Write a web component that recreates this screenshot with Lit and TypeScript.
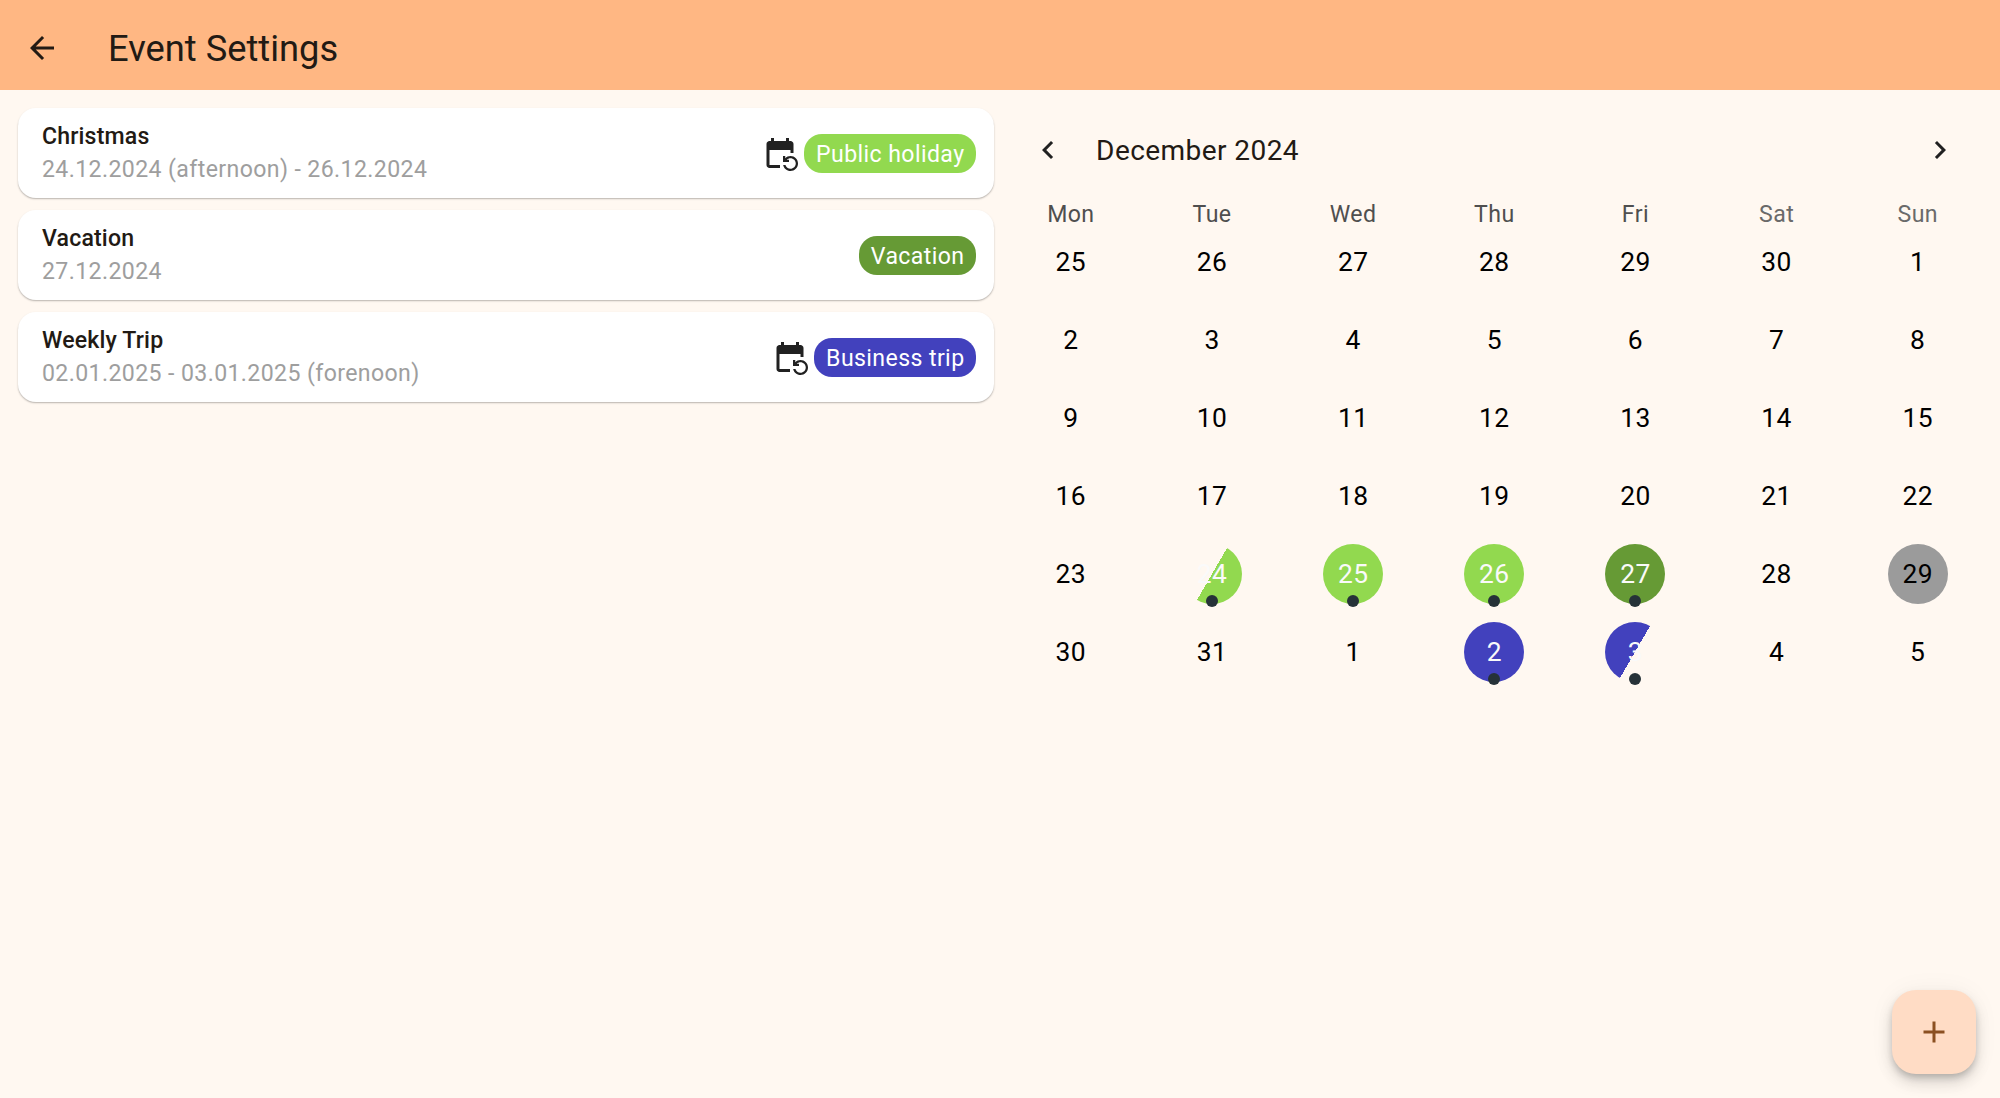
import { LitElement, html, css, svg, nothing } from "lit";
import { customElement, property } from "lit/decorators.js";
import { classMap } from "lit/directives/class-map.js";

const ICONS: Record<string, string> = {
  back: "M20 11H7.83l5.59-5.59L12 4l-8 8 8 8 1.41-1.41L7.83 13H20v-2z",
  left: "M15.41 7.41L14 6l-6 6 6 6 1.41-1.41L10.83 12z",
  right: "M10 6L8.59 7.41 13.17 12l-4.58 4.59L10 18l6-6z",
  plus: "M19 13h-6v6h-2v-6H5v-2h6V5h2v6h6v2z",
  repeat:
    "M21 12V6c0-1.1-.9-2-2-2h-1V2h-2v2H8V2H6v2H5c-1.1 0-2 .9-2 2v14c0 1.1.9 2 2 2h7v-2H5V10h14v2h2zM15.64 20c.43 1.45 1.77 2.5 3.36 2.5 1.93 0 3.5-1.57 3.5-3.5s-1.57-3.5-3.5-3.5c-.95 0-1.82.38-2.45 1H18V18h-4v-4h1.5v1.43c.9-.88 2.14-1.43 3.5-1.43 2.76 0 5 2.24 5 5s-2.24 5-5 5c-2.42 0-4.44-1.72-4.9-4h1.54z",
};

@customElement("md-icon")
class MdIcon extends LitElement {
  @property() name = "";
  static styles = css`
    :host { display: block; width: 36px; height: 36px; flex: none; }
    svg { display: block; width: 100%; height: 100%; fill: currentColor; }
  `;
  render() {
    return html`<svg viewBox="0 0 24 24">${svg`<path d=${ICONS[this.name]}></path>`}</svg>`;
  }
}

@customElement("event-card")
class EventCard extends LitElement {
  @property() heading = "";
  @property() dates = "";
  @property() label = "";
  @property() kind = "";
  @property({ type: Boolean }) repeats = false;
  static styles = css`
    :host {
      display: flex; align-items: center; box-sizing: border-box; height: 90px;
      padding: 0 18px 0 24px; border-radius: 18px; background: #fff;
      box-shadow: 0 1.5px 1.5px -0.5px rgba(0, 0, 0, 0.22), 0 1px 3px rgba(0, 0, 0, 0.07);
    }
    .text { flex: 1; }
    .title { font-size: 23.1px; line-height: 33px; font-weight: 500; letter-spacing: 0.165px; color: #221a14; }
    .dates { font-size: 23.1px; line-height: 33px; letter-spacing: 0.39px; color: #9e9e9e; }
    .icon { color: #212121; margin-right: 6px; }
    .badge {
      height: 39px; line-height: 41px; padding: 0 11.5px 0 12px; border-radius: 18px;
      font-size: 23.1px; letter-spacing: 0.4px; color: #fff;
    }
    .holiday { background: #92d94f; }
    .vacation { background: #669a35; }
    .business { background: #4241bd; }
  `;
  render() {
    return html`
      <div class="text">
        <div class="title">${this.heading}</div>
        <div class="dates">${this.dates}</div>
      </div>
      ${this.repeats ? html`<md-icon class="icon" name="repeat"></md-icon>` : nothing}
      <div class=${classMap({ badge: true, [this.kind]: true })}>${this.label}</div>
    `;
  }
}

type Mark = { fill: string; dot: boolean };
const MARKS: Record<number, Mark> = {
  29: { fill: "holiday-pm", dot: true },
  30: { fill: "holiday", dot: true },
  31: { fill: "holiday", dot: true },
  32: { fill: "vacation", dot: true },
  34: { fill: "today", dot: false },
  38: { fill: "business", dot: true },
  39: { fill: "business-am", dot: true },
};
const DAYS = Array.from({ length: 42 }, (_, i) => new Date(Date.UTC(2024, 10, 25 + i)).getUTCDate());

@customElement("month-calendar")
class MonthCalendar extends LitElement {
  static styles = css`
    :host { display: block; }
    .head { display: flex; align-items: center; height: 84px; padding: 0 30px; }
    .month {
      flex: 1; margin-left: 29.8px; padding-top: 1px; font-size: 28.05px; letter-spacing: 0.4125px; color: #221a14;
    }
    .chev { color: #212121; }
    .grid { display: grid; grid-template-columns: repeat(7, 1fr); grid-auto-rows: 78px; }
    .names { grid-auto-rows: 17px; padding-top: 14px; }
    .name { font-size: 23.1px; line-height: 17px; text-align: center; letter-spacing: 0.4125px; color: #4f4f4f; }
    .name.weekend { color: #6a6a6a; }
    .cell { display: flex; justify-content: center; align-items: center; position: relative; }
    .day {
      width: 60px; height: 60px; line-height: 60px; border-radius: 50%; text-align: center;
      font-size: 26.4px; letter-spacing: 0.4125px; color: #000;
    }
    .holiday, .holiday-pm, .vacation, .business, .business-am { color: #fafafa; }
    .holiday { background: #92d94f; }
    .holiday-pm { background: linear-gradient(120deg, transparent 50%, #92d94f 50%); }
    .vacation { background: #669a35; }
    .business { background: #4241bd; }
    .business-am { background: linear-gradient(120deg, #4241bd 50%, transparent 50%); }
    .today { background: #9b9b9b; }
    .dot {
      position: absolute; left: 50%; bottom: 6.5px; width: 12px; height: 12px;
      margin-left: -6px; border-radius: 50%; background: #263238;
    }
  `;
  render() {
    return html`
      <div class="head">
        <md-icon class="chev" name="left"></md-icon>
        <div class="month">December 2024</div>
        <md-icon class="chev" name="right"></md-icon>
      </div>
      <div class="grid names">
        ${["Mon", "Tue", "Wed", "Thu", "Fri", "Sat", "Sun"].map(
          (n, i) => html`<div class=${classMap({ name: true, weekend: i > 4 })}>${n}</div>`,
        )}
      </div>
      <div class="grid">
        ${DAYS.map((d, i) => {
          const m = MARKS[i];
          return html`<div class="cell">
            <div class=${classMap({ day: true, [m?.fill ?? "plain"]: true })}>${d}</div>
            ${m?.dot ? html`<div class="dot"></div>` : nothing}
          </div>`;
        })}
      </div>
    `;
  }
}

@customElement("app-root")
class AppRoot extends LitElement {
  static styles = css`
    :host {
      display: flex; flex-direction: column; box-sizing: border-box; height: 100vh; overflow: hidden;
      position: relative; background: #fff8f1; font-family: Roboto, "Liberation Sans", sans-serif;
    }
    .bar {
      display: flex; align-items: center; height: 90px; flex: none; box-sizing: border-box;
      padding: 6px 24px 0; background: #ffb783; color: #221a14;
    }
    .title { margin-left: 48px; padding-top: 1px; font-size: 36.3px; line-height: 48px; }
    .body { display: flex; flex: 1; }
    .list { display: flex; flex-direction: column; gap: 12px; width: 976px; padding: 18px 6px 0 18px; flex: none; }
    .calendar { flex: 1; padding: 18px 11.7px 0 0.3px; }
    .fab {
      position: absolute; right: 24px; bottom: 24px; width: 84px; height: 84px; border-radius: 24px;
      display: flex; align-items: center; justify-content: center; background: #ffdcc5; color: #8b5022;
      box-shadow: 0 4.5px 7.5px -1.5px rgba(0, 0, 0, 0.2), 0 9px 15px rgba(0, 0, 0, 0.13), 0 1.5px 27px rgba(0, 0, 0, 0.05);
    }
  `;
  render() {
    return html`
      <header class="bar">
        <md-icon name="back"></md-icon>
        <div class="title">Event Settings</div>
      </header>
      <main class="body">
        <section class="list">
          <event-card heading="Christmas" dates="24.12.2024 (afternoon) - 26.12.2024" label="Public holiday" kind="holiday" repeats></event-card>
          <event-card heading="Vacation" dates="27.12.2024" label="Vacation" kind="vacation"></event-card>
          <event-card heading="Weekly Trip" dates="02.01.2025 - 03.01.2025 (forenoon)" label="Business trip" kind="business" repeats></event-card>
        </section>
        <section class="calendar"><month-calendar></month-calendar></section>
      </main>
      <div class="fab"><md-icon name="plus"></md-icon></div>
    `;
  }
}
